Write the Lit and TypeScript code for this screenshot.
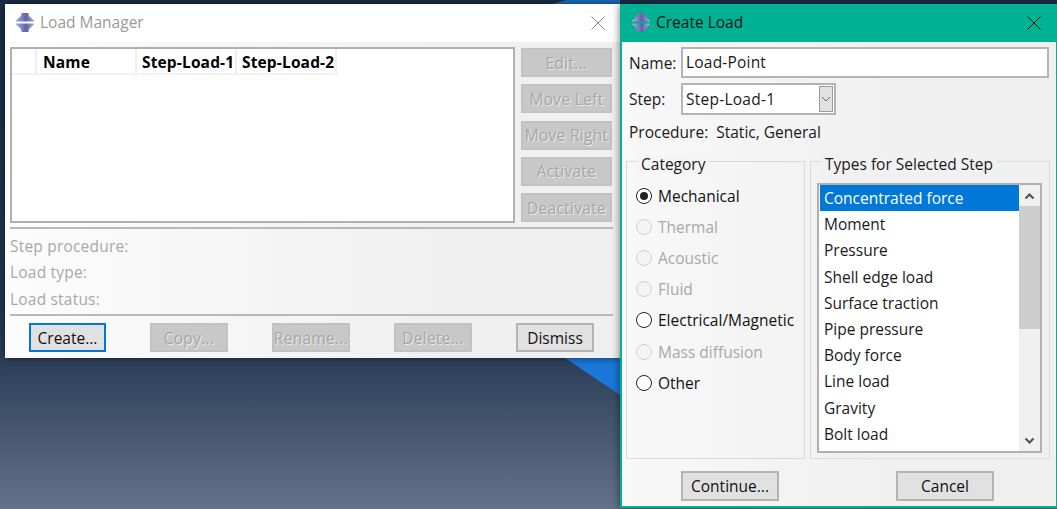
import { LitElement, html, css } from "lit";
import { customElement } from "lit/decorators.js";

const icon = (gap: string) => html`<svg class="ico" width="18" height="19" viewBox="0 0 18 19">
  <defs><linearGradient id="g${gap.slice(1)}" x1="0" x2="1" y1="0" y2="0">
    <stop offset="0" stop-color="#a8a8d8"/><stop offset=".3" stop-color="#8585c4"/><stop offset=".55" stop-color="#5f5fa8"/><stop offset=".8" stop-color="#8c8cc8"/><stop offset="1" stop-color="#a8a8d8"/></linearGradient></defs>
  <path fill="url(#g${gap.slice(1)})" d="M5.5 0H12.5L13 3L18 7.5V8.5H0V7.5L5 3ZM0 10.5H18V11.5L13 16L12.5 19H5.5L5 16L0 11.5Z"/>
</svg>`;

const closeX = html`<svg class="x" width="14" height="14" viewBox="0 0 14 14"><path d="M.5 .5L13.5 13.5M13.5 .5L.5 13.5" stroke="currentColor" stroke-width="1" fill="none"/></svg>`;

const chevron = (up: boolean) => html`<svg width="11" height="8" viewBox="0 0 11 8"><path d=${up ? "M1.5 6.5L5.5 2.5L9.5 6.5" : "M1.5 1.5L5.5 5.5L9.5 1.5"} stroke="#505050" stroke-width="2" fill="none"/></svg>`;
const thinChevron = html`<svg width="10" height="7" viewBox="0 0 10 7"><path d="M1 1L5 5L9 1" stroke="#6a6a6a" stroke-width="1" fill="none"/></svg>`;

@customElement("app-root")
export class AppRoot extends LitElement {
  static styles = css`
    :host { display: block; width: 1057px; height: 509px; position: relative; overflow: hidden;
      background: linear-gradient(180deg, #1b2d49 0, #24364f 60%, #2d3f58 71%, #62728a 100%);
      font-family: "Open Sans", "Noto Sans", sans-serif; font-size: 15.5px; color: #1a1a1a; }
    * { box-sizing: border-box; }
    .tri { position: absolute; left: 565px; top: 358px; width: 55px; height: 37px; background: #1a78d8; clip-path: polygon(0 0, 100% 0, 100% 100%); }
    .tri2 { position: absolute; left: 530px; top: 0; width: 90px; height: 4px; background: #1a6fc4; clip-path: polygon(25% 100%, 40% 0, 100% 0, 100% 100%); }
    .win { position: absolute; display: flex; flex-direction: column; box-shadow: 0 0 8px rgba(0,0,0,.55); }
    .lm { left: 5px; top: 4px; width: 615px; height: 354px; background: linear-gradient(90deg, #fcfcfc, #f0f0f0 70%); }
    .cl { left: 620px; top: 4px; width: 437px; height: 504px; border: solid #00b294; border-width: 0 1px 2px 2px; background: linear-gradient(90deg, #f8f8f8, #f0f0f0 60%); }
    .title { height: 38px; display: flex; align-items: center; padding: 0 15px 0 11px; gap: 6px; background: #fff; color: #9a9a9a; flex: none; }
    .title span { flex: 1; font-size: 15.5px; padding-bottom: 2px; }
    .ico { flex: none; margin-bottom: 2px; }
    .x { flex: none; color: #888; }
    .cl .title { background: #00b294; color: #111; padding: 0 15px 0 10px; }
    .cl .x { color: #111; }

    .lm-body { flex: 1; padding: 5px 8px 6px 5px; display: flex; flex-direction: column; }
    .top { display: flex; gap: 6px; height: 176px; flex: none; }
    .table { width: 505px; height: 176px; background: #fff; border: 2px solid #b0b0b0; flex: none; }
    .thead { display: flex; height: 26px; background: #f6f6f6; width: 325px; }
    .th { background: #fff; border-right: 2px solid #eeeeee; border-bottom: 2px solid #f2f2f2; font-weight: 700; color: #000; line-height: 27px; padding-left: 5px; white-space: nowrap; font-size: 15.5px; letter-spacing: .15px; overflow: hidden; }
    .th.a { width: 25px; } .th.b { width: 100px; padding-left: 6px; } .th.c { width: 100px; } .th.d { width: 100px; }
    .side { display: flex; flex-direction: column; gap: 7.3px; padding-top: 1px; width: 91px; }
    .btn { height: 29px; display: flex; align-items: center; justify-content: center; background: #e1e1e1; border: 2px solid #b4b4b4; white-space: nowrap; color: #111; font-size: 15.5px; }
    .btn.off { background: #c8c8c8; border-color: #c2c2c2; color: #a6a6a6; text-shadow: 1px 1px 0 #ececec; letter-spacing: .3px; }
    .btn.sel { border-color: #0078d7; }
    .side .btn { width: 91px; }
    .sep { height: 2px; background: #b8b8b8; flex: none; }
    .s1 { margin-top: 4px; width: 603px; }
    .s2 { margin-top: 0; }
    .info { height: 85px; flex: none; padding-top: 4px; color: #a8a8a8; letter-spacing: .2px; }
    .info div { height: 26.3px; line-height: 26px; }
    .bottom { display: flex; gap: 44px; padding: 7px 0 0 19px; }
    .bottom .btn { width: 78px; }
    .bottom .btn.sel { width: 77px; }

    .cl-body { flex: 1; display: flex; flex-direction: column; padding: 5px 6px 0 4px; }
    .row { display: flex; align-items: center; flex: none; }
    .row label { width: 55px; padding-left: 3px; flex: none; }
    .input { height: 31px; width: 368px; background: #fff; border: 2px solid #b4b4b4; line-height: 27px; padding-left: 3px; letter-spacing: .2px; }
    .combo { margin-top: 5px; height: 32px; }
    .select { width: 155px; height: 32px; border: 2px solid #b4b4b4; background: #fff; display: flex; align-items: center; padding-left: 3px; letter-spacing: .25px; }
    .select span { flex: 1; }
    .arrow { width: 14px; height: 26px; margin-right: 1px; background: #e1e1e1; border: 1px solid #9a9a9a; display: flex; align-items: center; justify-content: center; }
    .proc { margin-top: 4px; height: 26px; padding-left: 3px; line-height: 27px; }
    .proc b { font-weight: 400; margin-left: 8px; }
    .groups { display: flex; gap: 5px; margin-top: 16px; height: 298px; flex: none; }
    .group { position: relative; border: 1px solid #dadada; height: 298px; flex: none; }
    .legend { position: absolute; top: -8px; left: 10px; padding: 0 4px; background: #f5f5f5; line-height: 20px; }
    .cat { width: 179px; padding: 18px 0 0 9px; }
    .radio { display: flex; align-items: center; gap: 6px; height: 31.2px; color: #111; white-space: nowrap; }
    .radio.off { color: #a8a8a8; }
    .dot { width: 16px; height: 16px; border-radius: 50%; border: 1.5px solid #222; flex: none; display: flex; align-items: center; justify-content: center; background: #fff; }
    .radio.off .dot { border-color: #d0d0d0; background: #f4f4f4; }
    .dot i { width: 8px; height: 8px; border-radius: 50%; background: #222; }
    .types { width: 240px; padding: 21px 7px 0 6px; }
    .types .legend { left: 10px; background: #f1f1f1; }
    .list { height: 270px; border: 2px solid #b0b0b0; background: #fff; display: flex; padding: 0 0 0 1px; }
    .items { flex: 1; padding-top: 0; }
    .item { height: 26.2px; line-height: 27px; padding-left: 4px; color: #1a1a1a; white-space: nowrap; }
    .item.sel { background: #0078d7; color: #fff; }
    .bar { width: 21px; flex: none; background: #f0f0f0; display: flex; flex-direction: column; }
    .arr { height: 21px; display: flex; align-items: center; justify-content: center; flex: none; }
    .thumb { height: 123px; background: #cdcdcd; flex: none; }
    .fill { flex: 1; }
    .foot { display: flex; padding: 12px 0 0 55px; gap: 117px; }
    .foot .btn { width: 98px; height: 30px; }
  `;

  render() {
    const items = ["Concentrated force", "Moment", "Pressure", "Shell edge load", "Surface traction", "Pipe pressure", "Body force", "Line load", "Gravity", "Bolt load"];
    const radios: [string, string][] = [["Mechanical", "on"], ["Thermal", "off"], ["Acoustic", "off"], ["Fluid", "off"], ["Electrical/Magnetic", ""], ["Mass diffusion", "off"], ["Other", ""]];
    return html`
      <div class="tri"></div><div class="tri2"></div>
      <section class="win lm">
        <div class="title">${icon("#a")}<span>Load Manager</span>${closeX}</div>
        <div class="lm-body">
          <div class="top">
            <div class="table"><div class="thead">
              <div class="th a"></div><div class="th b">Name</div><div class="th c">Step-Load-1</div><div class="th d">Step-Load-2</div>
            </div></div>
            <div class="side">
              ${["Edit...", "Move Left", "Move Right", "Activate", "Deactivate"].map((t) => html`<div class="btn off">${t}</div>`)}
            </div>
          </div>
          <div class="sep s1"></div>
          <div class="info"><div>Step procedure:</div><div>Load type:</div><div>Load status:</div></div>
          <div class="sep s1 s2"></div>
          <div class="bottom">
            <div class="btn sel">Create...</div><div class="btn off">Copy...</div><div class="btn off">Rename...</div><div class="btn off">Delete...</div><div class="btn">Dismiss</div>
          </div>
        </div>
      </section>
      <section class="win cl">
        <div class="title">${icon("#b")}<span>Create Load</span>${closeX}</div>
        <div class="cl-body">
          <div class="row"><label>Name:</label><div class="input">Load-Point</div></div>
          <div class="row combo"><label>Step:</label><div class="select"><span>Step-Load-1</span><div class="arrow">${thinChevron}</div></div></div>
          <div class="proc">Procedure:<b>Static, General</b></div>
          <div class="groups">
            <div class="group cat"><div class="legend">Category</div>
              ${radios.map(([t, s]) => html`<div class="radio ${s === "off" ? "off" : ""}"><div class="dot">${s === "on" ? html`<i></i>` : ""}</div>${t}</div>`)}
            </div>
            <div class="group types"><div class="legend">Types for Selected Step</div>
              <div class="list">
                <div class="items">${items.map((t, i) => html`<div class="item ${i === 0 ? "sel" : ""}">${t}</div>`)}</div>
                <div class="bar"><div class="arr">${chevron(true)}</div><div class="thumb"></div><div class="fill"></div><div class="arr">${chevron(false)}</div></div>
              </div>
            </div>
          </div>
          <div class="foot"><div class="btn">Continue...</div><div class="btn">Cancel</div></div>
        </div>
      </section>
    `;
  }
}
